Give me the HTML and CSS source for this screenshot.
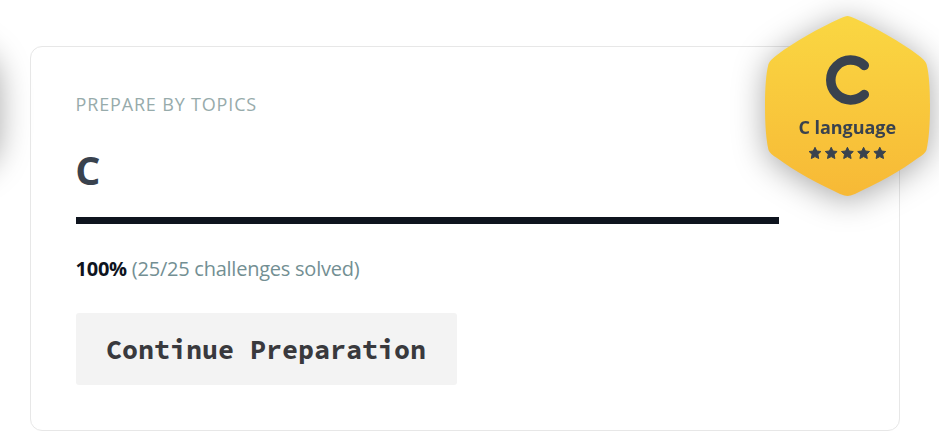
FILE: index.html
```html
<!DOCTYPE html>
<html lang="en">
<head>
<meta charset="utf-8">
<title>Preparation</title>
<link rel="stylesheet" href="styles.css">
</head>
<body>
<svg class="badge badge-previous" viewBox="0 0 165 180" aria-hidden="true">
  <path fill="#fac63b" d="M82.500 0Q85 0 90 2.500C111 12 136 26 153 39Q160 44 161.500 48C164 57 165 72 165 90C165 108 164 123 161.500 134Q160 138 153 142C136 155 111 168 90 178Q85 180 82.500 180Q80 180 75 178C54 168 29 155 12 142Q5 138 3.500 134C1 123 0 108 0 90C0 72 1 57 3.500 48Q5 44 12 39C29 26 54 12 75 2.500Q80 0 82.500 0Z"/>
</svg>
<main class="card">
  <p class="eyebrow">PREPARE BY TOPICS</p>
  <h1 class="title">C</h1>
  <div class="progress"></div>
  <p class="summary"><strong>100%</strong> (25/25 challenges solved)</p>
  <button class="continue" type="button">Continue Preparation</button>
</main>
<svg class="badge badge-current" viewBox="0 0 165 180">
  <defs>
    <linearGradient id="gold" x1="0" y1="0" x2="0" y2="1">
      <stop offset="0" stop-color="#fad742"/>
      <stop offset="1" stop-color="#f7b936"/>
    </linearGradient>
    <path id="star" d="M0-5.900L1.750-2.200L5.900-1.700L2.900 1.200L3.700 5.300L0 3.400L-3.700 5.300L-2.900 1.200L-5.900-1.700L-1.750-2.200Z"/>
  </defs>
  <path fill="url(#gold)" d="M82.500 0Q85 0 90 2.500C111 12 136 26 153 39Q160 44 161.500 48C164 57 165 72 165 90C165 108 164 123 161.500 134Q160 138 153 142C136 155 111 168 90 178Q85 180 82.500 180Q80 180 75 178C54 168 29 155 12 142Q5 138 3.500 134C1 123 0 108 0 90C0 72 1 57 3.500 48Q5 44 12 39C29 26 54 12 75 2.500Q80 0 82.500 0Z"/>
  <path class="badge-mark" d="M99.300 49.500A19.900 19.900 0 1 0 99.300 78.500"/>
  <text class="badge-name" x="82.300" y="117.800" textLength="97.500" lengthAdjust="spacing">C language</text>
  <g fill="#39424e" stroke="#39424e" stroke-width="1" stroke-linejoin="round">
    <use href="#star" x="50" y="137.200"/><use href="#star" x="66.200" y="137.200"/><use href="#star" x="82.400" y="137.200"/><use href="#star" x="98.600" y="137.200"/><use href="#star" x="114.800" y="137.200"/>
  </g>
</svg>
</body>
</html>
```
FILE: styles.css
```css
* { box-sizing: border-box; }
body {
  position: relative;
  height: 448px;
  margin: 0;
  padding: 46px 39px 17px 30px;
  overflow: hidden;
  background: #fff;
  font-family: "Open Sans", sans-serif;
}
.card {
  position: relative;
  height: 385px;
  padding: 44px 45px;
  border: 1px solid #e7e7e7;
  border-radius: 12px;
}
.eyebrow {
  margin: 0;
  text-indent: -0.4px;
  font-size: 18px;
  line-height: 26px;
  letter-spacing: 0.83px;
  color: #97abab;
}
.title {
  margin: 26px 0 0;
  text-indent: -0.7px;
  font-size: 39.500px;
  line-height: 54px;
  font-weight: 700;
  color: #39424e;
}
.progress {
  width: 703px;
  height: 7px;
  margin-top: 20px;
  background: #0e141e;
}
.summary {
  margin: 31px 0 0;
  text-indent: -0.5px;
  font-size: 20px;
  line-height: 28px;
  letter-spacing: -0.24px;
  color: #738f93;
}
.summary strong { color: #0e141e; }
.continue {
  display: block;
  width: 381px;
  height: 72px;
  margin-top: 30px;
  padding: 0 1px 0 0;
  border: 0;
  border-radius: 3px;
  background: #f3f3f3;
  color: #39393d;
  font: 700 26.7px "Source Code Pro", "Noto Sans Mono CJK JP", "DejaVu Sans Mono", monospace;
}
.badge {
  position: absolute;
  top: 16px;
  width: 165px;
  height: 180px;
  overflow: visible;
  filter: drop-shadow(0 4px 16px rgba(0, 0, 0, 0.35));
}
.badge-current { left: 765px; }
.badge-previous { left: -166px; }
.badge-mark {
  fill: none;
  stroke: #39424e;
  stroke-width: 9.500px;
  stroke-linecap: round;
}
.badge-name {
  font-size: 18px;
  font-weight: 700;
  fill: #39424e;
  text-anchor: middle;
}
```
